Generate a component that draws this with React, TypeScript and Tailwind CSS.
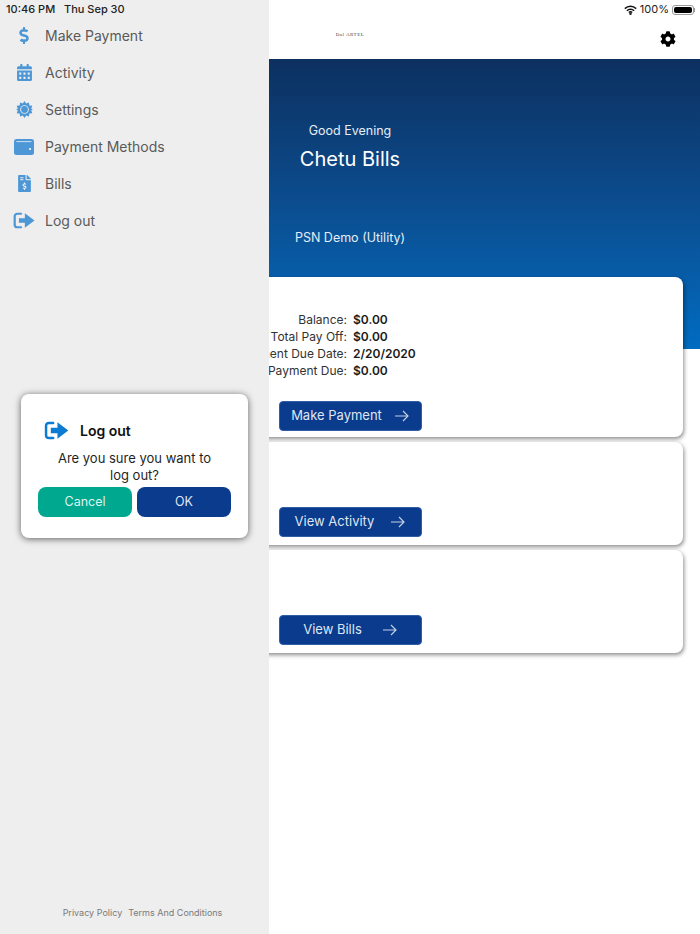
import { FaCalendarAlt, FaCog, FaDollarSign, FaFileInvoiceDollar } from "react-icons/fa"

const SIDE_BLUE = "#4d97d6"

const LogoutIcon = ({ className, color }: { className?: string; color: string }) => (
  <svg viewBox="0 0 26 20" className={className} fill="none">
    <path d="M9.5 2H5a3 3 0 0 0-3 3v10a3 3 0 0 0 3 3h4.5" stroke={color} strokeWidth="2.6" strokeLinecap="round" />
    <path d="M7 7.2h7V1.4L25.4 10 14 18.6v-5.8H7z" fill={color} />
  </svg>
)

const GearSunIcon = () => (
  <svg viewBox="0 0 20 20" className="w-[17px] h-[17px]" fill={SIDE_BLUE}>
    <path d="M10 0l2 3 3.2-1.3.5 3.5 3.5.5L17.900 9l2.100 1-2.100 1 1.300 3.300-3.500.5-.5 3.500L12 17l-2 3-2-3-3.200 1.300-.5-3.500-3.500-.5L2.100 11 0 10l2.100-1L.8 5.700l3.500-.5.5-3.500L8 3z" />
    <circle cx="10" cy="10" r="5.100" fill="#eeeeee" />
    <circle cx="10" cy="10" r="4" />
  </svg>
)

const WalletIcon = () => (
  <svg viewBox="0 0 20 16" className="w-[20px] h-[16px]">
    <rect width="20" height="16" rx="2.500" fill={SIDE_BLUE} />
    <rect x="2.400" y="2.100" width="15" height="1" fill="#cfe2f3" />
    <circle cx="16" cy="10" r="1" fill="#ffffff" />
  </svg>
)

const ArrowIcon = () => (
  <svg viewBox="0 0 14 12" className="w-[14px] h-[12px]" fill="none" stroke="#c3d0e6" strokeWidth="1.200">
    <path d="M0 6h13M8 1l5 5-5 5" />
  </svg>
)

const WifiIcon = () => (
  <svg viewBox="0 0 16 12" className="w-[13px] h-[10px]" fill="none" stroke="#111" strokeWidth="1.800">
    <path d="M1 4.300a10 10 0 0 1 14 0M3.500 6.900a6.400 6.400 0 0 1 9 0M5.900 9.200a3 3 0 0 1 4.200 0" />
    <circle cx="8" cy="10.600" r=".6" fill="#111" />
  </svg>
)

const menu = [
  { label: "Make Payment", icon: <FaDollarSign className="w-[16px] h-[17px]" color={SIDE_BLUE} /> },
  { label: "Activity", icon: <FaCalendarAlt className="w-[15px] h-[17px]" color={SIDE_BLUE} /> },
  { label: "Settings", icon: <GearSunIcon /> },
  { label: "Payment Methods", icon: <WalletIcon /> },
  { label: "Bills", icon: <FaFileInvoiceDollar className="w-[13px] h-[17px]" color={SIDE_BLUE} /> },
  { label: "Log out", icon: <LogoutIcon className="w-[22px] h-[17px]" color={SIDE_BLUE} /> },
]

const balances = [
  { label: "Balance:", value: "$0.00" },
  { label: "Total Pay Off:", value: "$0.00" },
  { label: "Payment Due Date:", value: "2/20/2020" },
  { label: "Minimum Payment Due:", value: "$0.00" },
]

const ActionButton = ({ label, gap }: { label: string; gap: string }) => (
  <button className={`w-[143px] h-[30px] rounded-[4px] bg-[#0a3b8c] border border-[#2f5da6] flex items-center justify-center ${gap} text-[13px] text-[#dfe6f2]`}>
    {label}
    <ArrowIcon />
  </button>
)

const cardShadow = "shadow-[1px_2px_4px_rgba(0,0,0,0.45)]"

export default function App() {
  return (
    <div className="relative w-[700px] h-[934px] bg-white overflow-hidden font-['Inter',sans-serif]">
      {/* page behind the drawer */}
      <div className="flex flex-col h-full">
        <div className="h-[59px] shrink-0 flex flex-col">
          <div className="h-[19px] flex items-center justify-end gap-[3px] pr-[5px] text-[11px] text-[#222]">
            <WifiIcon />
            <span>100%</span>
            <div className="flex items-center">
              <div className="w-[22px] h-[10px] rounded-[3px] border border-[#999] p-px">
                <div className="w-full h-full rounded-[2px] bg-black" />
              </div>
              <div className="w-px h-[4px] bg-[#999]" />
            </div>
          </div>
          <div className="relative flex-1 flex items-center justify-center pb-[8px]">
            <span className="flex items-start pl-[-4px] font-['Liberation_Serif',serif] text-[5px] leading-[6px] tracking-[0.5px] text-[#444]">
              Dal ARTEL
            </span>
            <FaCog className="absolute right-[24px] top-[12px] w-[16px] h-[16px] text-black" />
          </div>
        </div>

        <div className="h-[290px] shrink-0 bg-gradient-to-b from-[#0c3060] to-[#006cc1] flex flex-col items-center text-white">
          <div className="mt-[64px] text-[12.5px] leading-[16px] text-[#e6edf5]">Good Evening</div>
          <div className="mt-[7px] text-[20px] leading-[26px]">Chetu Bills</div>
          <div className="mt-[58px] text-[12.5px] leading-[16px] text-[#e6edf5]">PSN Demo (Utility)</div>
        </div>

        <div className="-mt-[72px] mx-[17px] flex flex-col gap-[5px]">
          <div className={`h-[160px] rounded-[8px] bg-white flex flex-col items-center ${cardShadow}`}>
            <div className="mt-[34px] grid grid-cols-[1fr_1fr] gap-x-[6px] w-[660px] text-[12px] leading-[17px] text-[#333]">
              {balances.map((row) => (
                <div key={row.label} className="contents">
                  <div className="text-right">{row.label}</div>
                  <div className="font-semibold text-[#1a1a1a]">{row.value}</div>
                </div>
              ))}
            </div>
            <div className="mt-[22px]">
              <ActionButton label="Make Payment" gap="gap-[13px]" />
            </div>
          </div>
          <div className={`h-[103px] rounded-[8px] bg-white flex flex-col items-center justify-end pb-[8px] ${cardShadow}`}>
            <ActionButton label="View Activity" gap="gap-[17px]" />
          </div>
          <div className={`h-[103px] rounded-[8px] bg-white flex flex-col items-center justify-end pb-[8px] ${cardShadow}`}>
            <ActionButton label="View Bills" gap="gap-[21px]" />
          </div>
        </div>
      </div>

      {/* drawer */}
      <div className="absolute inset-y-0 left-0 w-[269px] bg-[#eeeeee] flex flex-col">
        <div className="h-[17px] pl-[6px] pt-[2px] text-[11px] leading-[14px] font-medium text-[#222] whitespace-pre">
          10:46 PM   Thu Sep 30
        </div>
        <div className="flex flex-col">
          {menu.map((item) => (
            <div key={item.label} className="h-[37px] flex items-center">
              <div className="w-[45px] flex justify-center pl-[3px] shrink-0">{item.icon}</div>
              <span className="text-[14px] text-[#5a5a5a]">{item.label}</span>
            </div>
          ))}
        </div>
        <div className="mt-auto pb-[15px] flex justify-center gap-[6px] pl-[16px] text-[9px] leading-[12px] text-[#7a7a7a]">
          <span>Privacy Policy</span>
          <span>Terms And Conditions</span>
        </div>

        {/* log out dialog */}
        <div className="absolute left-[21px] top-[394px] w-[227px] h-[144px] rounded-[8px] bg-white shadow-[0_1px_7px_rgba(0,0,0,0.6)] flex flex-col items-center px-[17px]">
          <div className="w-full flex items-center gap-[11px] mt-[26px] pl-[6px]">
            <LogoutIcon className="w-[25px] h-[19px]" color="#0b7bd3" />
            <span className="text-[14px] font-semibold text-[#111]">Log out</span>
          </div>
          <div className="mt-[9px] text-[13px] leading-[17px] text-center text-[#1f1f1f] w-[170px]">
            Are you sure you want to log out?
          </div>
          <div className="mt-[3px] w-full grid grid-cols-2 gap-[5px]">
            <button className="h-[30px] rounded-[8px] bg-[#00a88f] text-[12.5px] text-[#dff4ef]">Cancel</button>
            <button className="h-[30px] rounded-[8px] bg-[#0a3b8c] text-[12.5px] text-[#dfe6f2]">OK</button>
          </div>
        </div>
      </div>
    </div>
  )
}
